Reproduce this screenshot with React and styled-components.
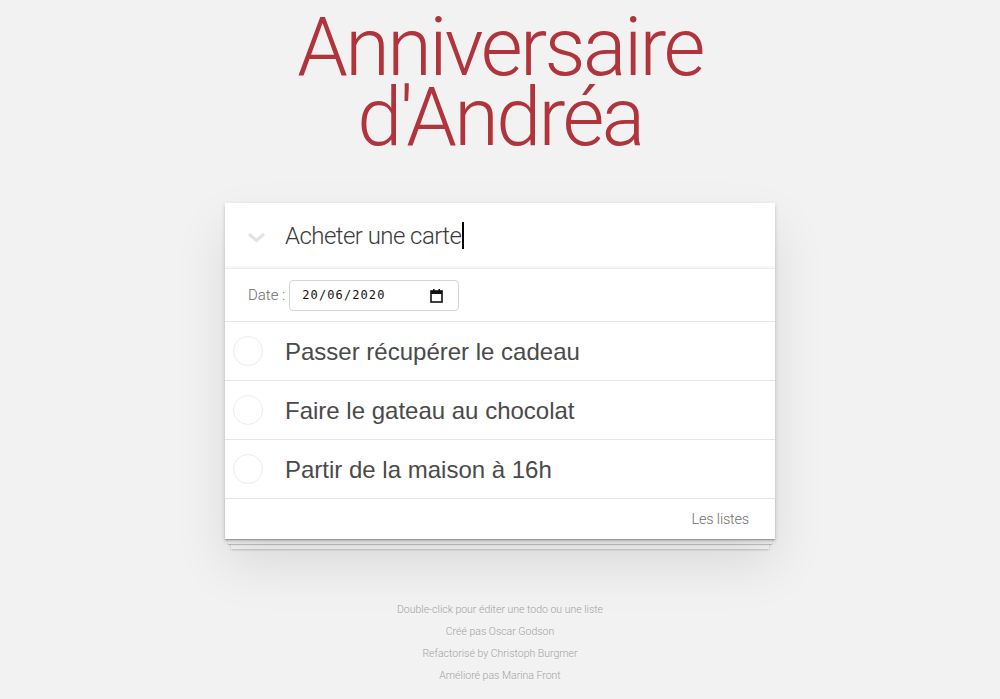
import React from "react";
import styled, { createGlobalStyle } from "styled-components";

const GlobalStyle = createGlobalStyle`
  html, body { margin: 0; padding: 0; }
  body {
    background: #f2f2f2;
    font-family: "Liberation Sans", Arial, sans-serif;
    color: #4d4d4d;
    -webkit-font-smoothing: antialiased;
  }
`;

const Page = styled.div`
  width: 550px;
  margin: 0 auto;
  padding-top: 13px;
  display: flex;
  flex-direction: column;
  align-items: stretch;
`;

const Title = styled.h1`
  margin: 0 0 50px;
  text-align: center;
  font-family: Roboto, "Liberation Sans", sans-serif;
  font-weight: 300;
  font-size: 81px;
  line-height: 70px;
  color: #b0343c;
  letter-spacing: -2.6px;
`;

const Card = styled.section`
  position: relative;
  background: #fff;
  box-shadow: 0 2px 4px 0 rgba(0, 0, 0, 0.2), 0 25px 50px 0 rgba(0, 0, 0, 0.1);
`;

const Header = styled.div`
  height: 65px;
  display: flex;
  align-items: center;
  border-bottom: 1px solid #ececec;
  box-shadow: inset 0 -2px 1px rgba(0, 0, 0, 0.03);
`;

const ToggleAll = styled.div`
  width: 60px;
  display: flex;
  justify-content: center;
  padding-left: 2px;
  box-sizing: border-box;
  margin-top: 3px;
`;

const NewTodo = styled.div`
  font-family: Roboto, "Liberation Sans", sans-serif;
  font-weight: 300;
  font-size: 24px;
  letter-spacing: -0.55px;
  color: #3a3a3a;
  display: flex;
  align-items: center;
`;

const Caret = styled.span`
  display: inline-block;
  width: 1.5px;
  height: 27px;
  background: #000;
  margin-left: 1px;
`;

const DateRow = styled.div`
  height: 52px;
  display: flex;
  align-items: center;
  padding-left: 23px;
  gap: 4px;
  border-bottom: 1px solid #e6e6e6;
`;

const DateLabel = styled.span`
  font-family: Roboto, "Liberation Sans", sans-serif;
  font-weight: 300;
  font-size: 15px;
  color: #6b6b6b;
`;

const DateField = styled.div`
  width: 170px;
  height: 31px;
  box-sizing: border-box;
  border: 1px solid #d4d4d4;
  border-radius: 4px;
  display: flex;
  align-items: center;
  justify-content: space-between;
  padding: 0 15px 0 12px;
  background: #fff;
`;

const DateValue = styled.span`
  font-family: "DejaVu Sans Mono", "Liberation Mono", monospace;
  font-size: 12px;
  font-weight: 400;
  letter-spacing: 1.1px;
  color: #111;
`;

const List = styled.ul`
  list-style: none;
  margin: 0;
  padding: 0;
`;

const Item = styled.li`
  height: 58px;
  display: flex;
  align-items: center;
  border-bottom: 1px solid #e6e6e6;
`;

const CheckCircle = styled.span`
  width: 30px;
  height: 30px;
  box-sizing: border-box;
  margin: 0 22px 0 8px;
  border: 1px solid #ededed;
  border-radius: 50%;
  flex: none;
`;

const ItemLabel = styled.label`
  font-family: "Liberation Sans", Arial, sans-serif;
  font-size: 24px;
  color: #4a4a4a;
  margin-top: 2px;
`;

const Footer = styled.footer`
  position: relative;
  height: 40px;
  display: flex;
  align-items: center;
  justify-content: flex-end;
  padding: 0 26px 0 15px;
  &::before {
    content: "";
    position: absolute;
    right: 0;
    bottom: 0;
    left: 0;
    height: 40px;
    overflow: hidden;
    z-index: -1;
    box-shadow: 0 1px 1px rgba(0, 0, 0, 0.2), 0 8px 0 -3px #f6f6f6,
      0 9px 1px -3px rgba(0, 0, 0, 0.2), 0 16px 0 -6px #f6f6f6,
      0 17px 2px -6px rgba(0, 0, 0, 0.2);
  }
`;

const FooterLink = styled.a`
  font-family: Roboto, "Liberation Sans", sans-serif;
  font-weight: 300;
  font-size: 14.5px;
  letter-spacing: -0.2px;
  color: #707070;
  text-decoration: none;
  margin-top: 1px;
`;

const Info = styled.footer`
  margin-top: 65px;
  text-align: center;
  font-family: Roboto, "Liberation Sans", sans-serif;
  font-weight: 300;
  font-size: 10.5px;
  color: #a0a0a0;
  text-shadow: 0 1px 0 rgba(255, 255, 255, 0.5);
  display: flex;
  flex-direction: column;
  gap: 10px;
`;

const InfoLine = styled.p`
  margin: 0;
  line-height: 12px;
`;

const Chevron = () => (
  <svg width="19" height="11" viewBox="0 0 19 11">
    <polyline points="2,2 9.5,8.5 17,2" fill="none" stroke="#e3e3e3" strokeWidth="3.2" />
  </svg>
);

const CalendarIcon = () => (
  <svg width="13" height="15" viewBox="0 0 13 15">
    <rect x="1" y="3" width="11" height="11" fill="none" stroke="#111" strokeWidth="1.6" />
    <rect x="1" y="3" width="11" height="3" fill="#111" />
    <rect x="3" y="1" width="1.6" height="3" fill="#111" />
    <rect x="8.4" y="1" width="1.6" height="3" fill="#111" />
  </svg>
);

const todos = [
  "Passer récupérer le cadeau",
  "Faire le gateau au chocolat",
  "Partir de la maison à 16h",
];

export default function App() {
  return (
    <>
      <GlobalStyle />
      <Page>
        <Title>
          Anniversaire
          <br />
          d'Andréa
        </Title>
        <Card>
          <Header>
            <ToggleAll>
              <Chevron />
            </ToggleAll>
            <NewTodo>
              Acheter une carte
              <Caret />
            </NewTodo>
          </Header>
          <DateRow>
            <DateLabel>Date :</DateLabel>
            <DateField>
              <DateValue>20/06/2020</DateValue>
              <CalendarIcon />
            </DateField>
          </DateRow>
          <List>
            {todos.map((t) => (
              <Item key={t}>
                <CheckCircle />
                <ItemLabel>{t}</ItemLabel>
              </Item>
            ))}
          </List>
          <Footer>
            <FooterLink href="#">Les listes</FooterLink>
          </Footer>
        </Card>
        <Info>
          <InfoLine>Double-click pour éditer une todo ou une liste</InfoLine>
          <InfoLine>Créé pas Oscar Godson</InfoLine>
          <InfoLine>Refactorisé by Christoph Burgmer</InfoLine>
          <InfoLine>Amélioré pas Marina Front</InfoLine>
        </Info>
      </Page>
    </>
  );
}
